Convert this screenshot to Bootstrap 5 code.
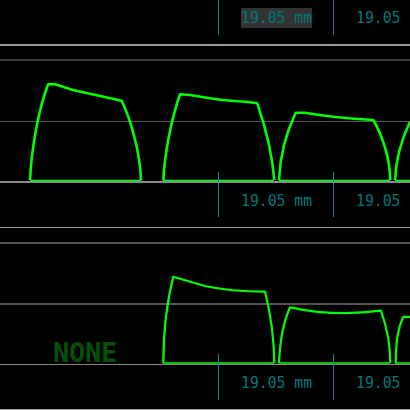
<!DOCTYPE html>
<html lang="en">

<head>
    <meta charset="UTF-8">
    <meta name="viewport" content="width=device-width, initial-scale=1.0">
    <title>Keycap profiles</title>
    <link href="https://cdn.jsdelivr.net/npm/bootstrap@5.3.0/dist/css/bootstrap.min.css" rel="stylesheet">
    <style>
        body {
            background: #000;
            overflow: hidden;
            height: 410px;
        }

        .dim-row {
            padding-left: 218px;
            font-family: "DejaVu Sans Mono", monospace;
            font-size: 16.4px;
            line-height: 20px;
            color: #007878;
            white-space: nowrap;
            position: relative;
        }

        .dim-cell {
            border-left: 1px solid #008b8b;
            padding-left: 22px;
        }

        .dim-first {
            width: 115px;
            flex-shrink: 0;
        }

        .dim-text {
            transform: scaleX(.9);
            transform-origin: left;
        }

        .dim-top {
            height: 35px;
            margin-bottom: 9px;
        }

        .dim-top .dim-cell {
            padding-top: 8px;
        }

        .dim-mid {
            height: 45px;
            margin-top: -11px;
            margin-bottom: 10px;
        }

        .dim-low {
            height: 46px;
            margin-top: -11px;
            margin-bottom: 9px;
        }

        .dim-mid .dim-cell,
        .dim-low .dim-cell {
            padding-top: 19px;
        }

        .dim-sel {
            background: #333;
        }

        .rule-a {
            height: 2px;
            background: #999;
            margin-bottom: 13px;
        }

        .rule-b {
            height: 1px;
            background: #999;
            margin-bottom: 14px;
        }

        .plot {
            display: block;
            width: 410px;
        }

        .grid-line {
            stroke: #555;
        }

        .base-line {
            stroke: #888;
        }

        .cap {
            fill: none;
            stroke: #0f0;
            stroke-width: 2.6;
            stroke-linejoin: round;
        }

        .cap-low {
            stroke-width: 2.2;
        }

        .cap-base {
            fill: none;
            stroke: #0f0;
            stroke-width: 1.4;
        }

        .none-label {
            left: 53px;
            top: 99px;
            font-family: "DejaVu Sans Mono", monospace;
            font-weight: 700;
            font-size: 27px;
            letter-spacing: -.25px;
            line-height: 24px;
            color: #065006;
        }
    </style>
</head>

<body class="m-0">
    <div class="d-flex dim-row dim-top">
        <div class="dim-cell dim-first"><span class="d-inline-block dim-text dim-sel">19.05 mm</span></div>
        <div class="dim-cell flex-grow-1"><span class="d-inline-block dim-text">19.05</span></div>
    </div>
    <div class="rule-a"></div>

    <!-- upper row of caps -->
    <svg class="plot" height="124" viewBox="0 59 410 124">
        <line class="grid-line" x1="0" x2="410" y1="60" y2="60" stroke-width="1.5" />
        <line class="grid-line" x1="0" x2="410" y1="121.5" y2="121.5" />
        <line class="base-line" x1="0" x2="410" y1="182" y2="182" stroke-width="2" />
        <path class="cap-base" d="M30 180.5H141M163 180.5H274M279 180.5H390M395 180.5H410" />
        <path class="cap" d="M30 180C31.5 150 38 110 48.3 84L55 84.3L73 90L82 92L121.7 100.7C130 118 140 150 141 180" />
        <path class="cap" d="M163.3 180C164.5 155 171 120 180 94.3L190 95L205 97.5L222 100L248 102L257.3 103.3C263 120 272 150 274.3 180" />
        <path class="cap" d="M279 180C280 155 286 133 295.7 112.7L305 112.7Q335 118 373.3 120C382 135 390 158 390.3 180" />
        <path class="cap" d="M395 180C396 160 401 140 410 121.7" />
    </svg>

    <div class="d-flex dim-row dim-mid">
        <div class="dim-cell dim-first"><span class="d-inline-block dim-text">19.05 mm</span></div>
        <div class="dim-cell flex-grow-1"><span class="d-inline-block dim-text">19.05</span></div>
    </div>
    <div class="rule-b"></div>

    <!-- lower row of caps -->
    <div class="position-relative">
        <svg class="plot" height="123" viewBox="0 242 410 123">
            <line class="grid-line" x1="0" x2="410" y1="243" y2="243" stroke-width="2" />
            <line class="grid-line" x1="0" x2="410" y1="304" y2="304" stroke-width="2" />
            <line class="base-line" x1="0" x2="410" y1="364.5" y2="364.5" />
            <path class="cap-base" d="M163 363H274M279 363H390M395 363H410" />
            <path class="cap cap-low" d="M163.3 363C163.5 330 166 305 173.3 276.7L205 286Q230 291.5 265 291.7C271 315 274 340 274.3 363" />
            <path class="cap cap-low" d="M279 363C280 340 283 323 290 307.3Q335 317 381 310.7C387 328 390.5 345 390.3 363" />
            <path class="cap cap-low" d="M395.7 363C396 340 398 328 403.3 316.7L410 317" />
        </svg>
        <div class="position-absolute none-label">NONE</div>
    </div>

    <div class="d-flex dim-row dim-low">
        <div class="dim-cell dim-first"><span class="d-inline-block dim-text">19.05 mm</span></div>
        <div class="dim-cell flex-grow-1"><span class="d-inline-block dim-text">19.05</span></div>
    </div>
    <div class="rule-b"></div>

    <script src="https://cdn.jsdelivr.net/npm/bootstrap@5.3.0/dist/js/bootstrap.bundle.min.js"></script>
</body>

</html>
